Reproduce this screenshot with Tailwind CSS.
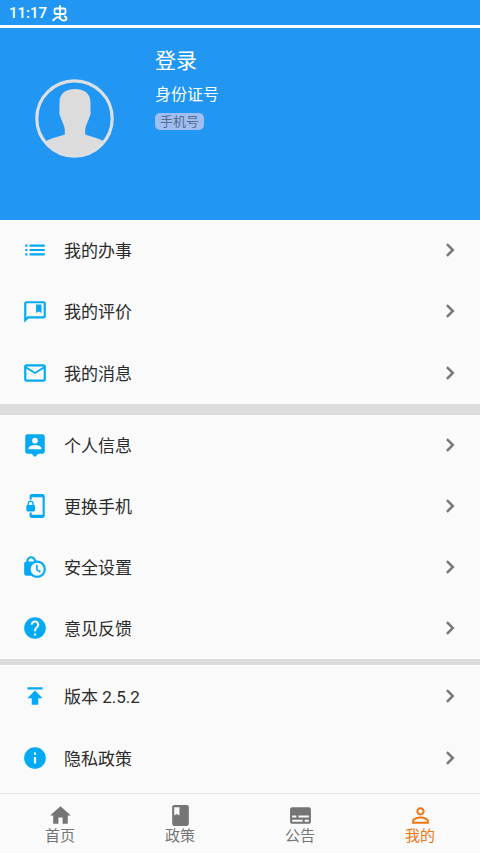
<!DOCTYPE html>
<html lang="zh-CN">
<head>
    <meta charset="UTF-8">
    <meta name="viewport" content="width=device-width, initial-scale=1.0">
    <title>我的</title>
    <script src="https://cdn.jsdelivr.net/npm/@tailwindcss/browser@4"></script>
</head>
<body class="bg-[#fafafa] font-[Roboto,'Noto_Sans_CJK_SC',sans-serif] text-[#2b2b2b]">
    <div class="w-[480px] h-[853px] flex flex-col overflow-hidden">
        <!-- Status bar -->
        <div class="h-[25px] shrink-0 bg-[#2196f3] flex items-center pl-[9px] pt-[2px] gap-[5px] text-white">
            <span class="w-[38px] text-[15px] leading-none font-medium">11:17</span>
            <svg class="w-4 h-[17px]" viewBox="0 0 16 17" fill="none" stroke="currentColor" stroke-width="1.8" stroke-linecap="round" stroke-linejoin="round">
                <path d="M8 1v12M4 3.500h8q1.500 0 1.500 1.500v2.500q0 1.500-1.500 1.500H4q-1.500 0-1.500-1.500V5q0-1.500 1.500-1.500zM1.200 15.200l3.300-2.700q1.500-.8 3 .5l2 1.700q1.500 1 3 .8 2-.3 2-2.200 0-1.500-1.800-1.800"/>
            </svg>
        </div>
        <div class="h-[3px] shrink-0 bg-white"></div>

        <!-- Profile header -->
        <div class="h-[192px] shrink-0 bg-[#2196f3] flex pl-[35px]">
            <svg class="w-20 h-20 mt-[51px] shrink-0" viewBox="0 0 80 80">
                <path fill="#dcdcdc" d="M40 10c-10 0-15.500 5-15.500 13.500V31c-.6 2.500.2 5.500 1 7 1.500 5 4.300 9 4.300 13v4.500C24 57.500 16 59 10.500 62.500 18 72 27 78 39.500 78s22.500-6 29.500-15.500C63.500 59 56 57.500 50.200 55.500V51c0-4 2.800-8 4.300-13 .8-1.500 1.600-4.500 1-7v-7.500C55.500 15 50 10 40 10z"/>
                <circle cx="39.500" cy="39.500" r="37.700" fill="none" stroke="#dcdfe3" stroke-width="3.200"/>
            </svg>
            <div class="pl-10 pt-[19px] text-white">
                <div class="text-[21px] leading-[28px]">登录</div>
                <div class="text-[16px] leading-[24px] mt-[8px]">身份证号</div>
                <div class="mt-[6px] w-[49px] h-[17px] rounded-[5px] bg-[#9fbff3] text-[#5b6b8c] text-[13px] leading-[17px] text-center">手机号</div>
            </div>
        </div>

        <div id="menu" class="h-[573px] shrink-0"></div>

        <!-- Bottom tabs -->
        <div class="h-[60px] shrink-0 border-t border-[#e8e8e8] grid grid-cols-4 text-[#757575] text-[15px] leading-[18px]">
            <div class="flex flex-col items-center pt-[9px]">
                <svg class="w-[25px] h-[25px]" viewBox="0 0 24 24" fill="currentColor"><path d="M10 20v-6h4v6h5v-8h3L12 3 2 12h3v8z"/></svg>
                <span class="-mt-px">首页</span>
            </div>
            <div class="flex flex-col items-center pt-[9px]">
                <svg class="w-[25px] h-[25px]" viewBox="0 0 24 24" fill="currentColor"><path d="M18 2H6c-1.100 0-2 .9-2 2v16c0 1.100.9 2 2 2h12c1.100 0 2-.9 2-2V4c0-1.100-.9-2-2-2zM6 4h5v8l-2.500-1.500L6 12V4z"/></svg>
                <span class="-mt-px">政策</span>
            </div>
            <div class="flex flex-col items-center pt-[9px]">
                <svg class="w-[25px] h-[25px]" viewBox="0 0 24 24" fill="currentColor"><path d="M20 4H4c-1.100 0-2 .9-2 2v12c0 1.100.9 2 2 2h16c1.100 0 2-.9 2-2V6c0-1.100-.9-2-2-2zM4 12h4v2H4v-2zm10 6H4v-2h10v2zm6 0h-4v-2h4v2zm0-4H10v-2h10v2z"/></svg>
                <span class="-mt-px">公告</span>
            </div>
            <div class="flex flex-col items-center pt-[9px] text-[#ef7512]">
                <svg class="w-[25px] h-[25px]" viewBox="0 0 24 24" fill="currentColor"><path d="M12 5.900c1.160 0 2.100.94 2.100 2.100s-.94 2.100-2.100 2.100S9.900 9.160 9.900 8s.94-2.100 2.100-2.100m0 9c2.970 0 6.100 1.460 6.100 2.100v1.100H5.900V17c0-.64 3.130-2.100 6.100-2.100M12 4C9.790 4 8 5.790 8 8s1.790 4 4 4 4-1.790 4-4-1.790-4-4-4zm0 9c-2.670 0-8 1.340-8 4v3h16v-3c0-2.660-5.330-4-8-4z"/></svg>
                <span class="-mt-px">我的</span>
            </div>
        </div>
    </div>

    <script>
        const icons = {
            list: 'M3 13h2v-2H3v2zm0 4h2v-2H3v2zm0-8h2V7H3v2zm4 4h14v-2H7v2zm0 4h14v-2H7v2zM7 7v2h14V7H7z',
            review: 'M20 2H4c-1.100 0-2 .9-2 2v18l4-4h14c1.100 0 2-.9 2-2V4c0-1.100-.9-2-2-2zm0 14H5.170L4 17.170V4h16v12zM13 5h5v8l-2.500-1.500L13 13z',
            mail: 'M22 6c0-1.100-.9-2-2-2H4c-1.100 0-2 .9-2 2v12c0 1.100.9 2 2 2h16c1.100 0 2-.9 2-2V6zm-2 0l-8 5-8-5h16zm0 12H4V8l8 5 8-5v10z',
            person: 'M19 2H5c-1.110 0-2 .9-2 2v14c0 1.100.89 2 2 2h4l3 3 3-3h4c1.100 0 2-.9 2-2V4c0-1.100-.9-2-2-2zm-7 3.300c1.490 0 2.700 1.210 2.700 2.700 0 1.490-1.210 2.700-2.700 2.700-1.490 0-2.700-1.210-2.700-2.700 0-1.490 1.210-2.700 2.700-2.700zM18 16H6v-.9c0-2 4-3.100 6-3.100s6 1.100 6 3.100v.9z',
            phone: 'M19 1H9c-1.100 0-2 .9-2 2v3h2V4h10v16H9v-2H7v3c0 1.100.9 2 2 2h10c1.100 0 2-.9 2-2V3c0-1.100-.9-2-2-2zm-8.200 10V9.500C10.800 8.100 9.400 7 8 7S5.200 8.100 5.200 9.500V11c-.6 0-1.200.6-1.200 1.200v3.500c0 .7.6 1.300 1.200 1.300h5.500c.7 0 1.300-.6 1.300-1.200v-3.500c0-.7-.6-1.300-1.200-1.300zm-1.300 0h-3V9.500c0-.8.7-1.300 1.500-1.300s1.500.5 1.500 1.300V11z',
            lock: 'M14.500 14.200l2.900 1.700-.8 1.300L13 15v-5h1.500v4.200zM22 14c0 4.410-3.590 8-8 8-2.020 0-3.860-.76-5.270-2H4c-1.150 0-2-.85-2-2V9c0-1.120.89-1.960 2-2v-.5C4 4.010 6.010 2 8.500 2c2.340 0 4.240 1.790 4.460 4.080.34-.05.69-.08 1.040-.08 4.410 0 8 3.590 8 8zM6 7h5v-.74C10.880 4.990 9.800 4 8.500 4 7.120 4 6 5.120 6 6.500V7zm14 7c0-3.310-2.690-6-6-6s-6 2.690-6 6 2.690 6 6 6 6-2.690 6-6z',
            help: 'M12 2C6.480 2 2 6.480 2 12s4.480 10 10 10 10-4.480 10-10S17.520 2 12 2zm1 17h-2v-2h2v2zm2.070-7.750l-.9.920C13.450 12.900 13 13.500 13 15h-2v-.5c0-1.100.45-2.100 1.170-2.830l1.240-1.260c.37-.36.590-.86.590-1.410 0-1.100-.9-2-2-2s-2 .9-2 2H8c0-2.210 1.790-4 4-4s4 1.790 4 4c0 .88-.36 1.680-.93 2.250z',
            publish: 'M5 4v2h14V4H5zm0 10h4v6h6v-6h4l-7-7-7 7z',
            info: 'M12 2C6.480 2 2 6.480 2 12s4.480 10 10 10 10-4.480 10-10S17.520 2 12 2zm1 15h-2v-6h2v6zm0-8h-2V7h2v2z'
        };

        // gap is the grey band drawn below a group
        const groups = [
            { height: 184, gap: 11, rowHeight: 61.3, items: [['list', '我的办事'], ['review', '我的评价'], ['mail', '我的消息']] },
            { height: 244, gap: 6, rowHeight: 60.9, items: [['person', '个人信息'], ['phone', '更换手机'], ['lock', '安全设置'], ['help', '意见反馈']] },
            { height: 128, gap: 0, rowHeight: 62, items: [['publish', '版本 2.5.2'], ['info', '隐私政策']] }
        ];

        document.getElementById('menu').innerHTML = groups.map(group => `
            <div class="flex flex-col" style="height: ${group.height}px">
                ${group.items.map(([icon, label]) => `
                    <div class="flex items-center pl-[22px] pr-[17px]" style="height: ${group.rowHeight}px">
                        <svg class="w-[26px] h-[26px] mb-[0.5px] text-[#03a9f4]" viewBox="0 0 24 24" fill="currentColor"><path fill-rule="evenodd" d="${icons[icon]}"/></svg>
                        <span class="flex-1 pl-4 pt-px text-[17px] leading-6">${label}</span>
                        <svg class="w-[26px] h-[26px] mb-px text-[#757575]" viewBox="0 0 24 24" fill="currentColor" stroke="currentColor" stroke-width="0.4"><path d="M10 6L8.590 7.410 13.170 12l-4.580 4.590L10 18l6-6z"/></svg>
                    </div>
                `).join('')}
            </div>
            <div class="bg-[#dcdcdc]" style="height: ${group.gap}px"></div>
        `).join('');
    </script>
</body>
</html>
